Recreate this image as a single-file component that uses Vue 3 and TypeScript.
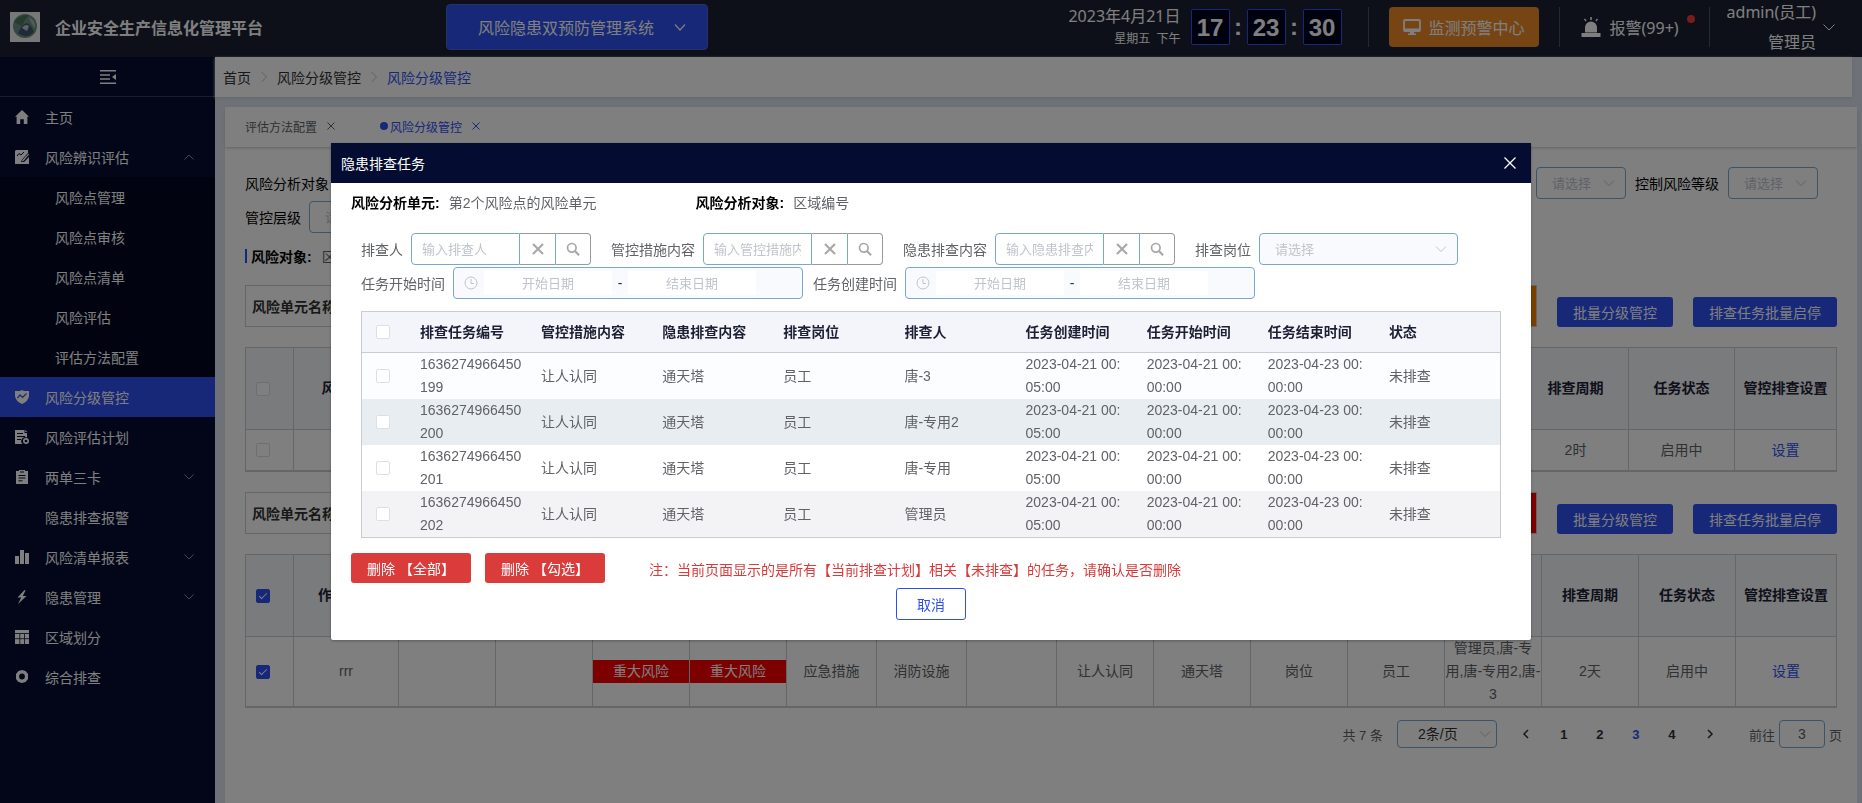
<script setup lang="ts">
import { ref } from 'vue'

interface MenuItem {
  label: string
  icon?: string
  arrow?: 'up' | 'down'
  active?: boolean
  children?: string[]
}

interface Column {
  width: string
  title: string
}

interface Cell {
  text: string
  kind?: 'tag' | 'link'
}

interface RiskUnit {
  id: string
  level: 'major' | 'larger'
  checked: boolean
  columns: Column[]
  cells: Cell[]
}

interface Task {
  id: string
  person: string
  checked: boolean
}

const menu: MenuItem[] = [
  { label: '主页', icon: 'home' },
  {
    label: '风险辨识评估',
    icon: 'edit',
    arrow: 'up',
    children: ['风险点管理', '风险点审核', '风险点清单', '风险评估', '评估方法配置'],
  },
  { label: '风险分级管控', icon: 'shield', active: true },
  { label: '风险评估计划', icon: 'plan' },
  { label: '两单三卡', icon: 'clipboard', arrow: 'down' },
  { label: '隐患排查报警' },
  { label: '风险清单报表', icon: 'bars', arrow: 'down' },
  { label: '隐患管理', icon: 'bolt', arrow: 'down' },
  { label: '区域划分', icon: 'grid' },
  { label: '综合排查', icon: 'hexagon' },
]

const blanks = (count: number, width: string): Column[] =>
  Array.from({ length: count }, () => ({ width, title: '' }))

const units = ref<RiskUnit[]>([
  {
    id: 'unit-1',
    level: 'larger',
    checked: false,
    columns: [
      { width: '112px', title: '风险名称' },
      ...blanks(10, 'auto'),
      { width: '106px', title: '排查周期' },
      { width: '106px', title: '任务状态' },
      { width: '101px', title: '管控排查设置' },
    ],
    cells: [
      ...Array.from({ length: 11 }, () => ({ text: '' })),
      { text: '2时' },
      { text: '启用中' },
      { text: '设置', kind: 'link' },
    ],
  },
  {
    id: 'unit-2',
    level: 'major',
    checked: true,
    columns: [
      { width: '105px', title: '作业活动' },
      ...blanks(4, '97px'),
      ...blanks(3, '90px'),
      ...blanks(5, 'auto'),
      { width: '97px', title: '排查周期' },
      { width: '97px', title: '任务状态' },
      { width: '100px', title: '管控排查设置' },
    ],
    cells: [
      { text: 'rrr' },
      { text: '' },
      { text: '' },
      { text: '重大风险', kind: 'tag' },
      { text: '重大风险', kind: 'tag' },
      { text: '应急措施' },
      { text: '消防设施' },
      { text: '' },
      { text: '让人认同' },
      { text: '通天塔' },
      { text: '岗位' },
      { text: '员工' },
      { text: '管理员,唐-专用,唐-专用2,唐-3' },
      { text: '2天' },
      { text: '启用中' },
      { text: '设置', kind: 'link' },
    ],
  },
])

const taskHeaders: string[] = [
  '排查任务编号', '管控措施内容', '隐患排查内容', '排查岗位', '排查人',
  '任务创建时间', '任务开始时间', '任务结束时间', '状态',
]

const tasks = ref<Task[]>([
  { id: '1636274966450199', person: '唐-3', checked: false },
  { id: '1636274966450200', person: '唐-专用2', checked: false },
  { id: '1636274966450201', person: '唐-专用', checked: false },
  { id: '1636274966450202', person: '管理员', checked: false },
])
const allTasks = ref(false)

const searches = [
  { id: 'q-person', label: '排查人', hint: '输入排查人' },
  { id: 'q-measure', label: '管控措施内容', hint: '输入管控措施内容' },
  { id: 'q-content', label: '隐患排查内容', hint: '输入隐患排查内容' },
]
const ranges = [
  { id: 'r-start', label: '任务开始时间' },
  { id: 'r-create', label: '任务创建时间' },
]

const pages: number[] = [1, 2, 3, 4]
const page = ref(3)
</script>

<template>
  <div class="app">
    <header class="topbar">
      <svg class="logo" viewBox="0 0 30 30" aria-hidden="true">
        <rect width="30" height="30" fill="#eef0ee" />
        <circle cx="15" cy="14" r="12" fill="#6f8f86" />
        <path d="M4 10 Q10 2 19 3 Q14 8 12 14 Q8 12 4 10Z" fill="#4b7a5c" />
        <path d="M8 21 Q12 12 17 11 Q22 14 24 20 Q16 28 8 21Z" fill="#3f5870" />
        <path d="M12 16 Q15 11 19 14 L17 19 Z" fill="#b8c8d4" />
        <path d="M19 5 Q26 9 25 16 Q21 12 19 5Z" fill="#a5bda2" />
      </svg>
      <h1>企业安全生产信息化管理平台</h1>
      <button type="button" class="system">
        风险隐患双预防管理系统
        <svg width="14" height="14" viewBox="0 0 14 14"><path d="M2 4.500l5 5.500 5-5.500" fill="none" stroke="currentColor" stroke-width="1.200" /></svg>
      </button>
      <div class="date"><span>2023年4月21日</span><small>星期五&nbsp; 下午</small></div>
      <div class="clock"><b>17</b><i>:</i><b>23</b><i>:</i><b>30</b></div>
      <span class="rule"></span>
      <button type="button" class="monitor">
        <svg width="18" height="18" viewBox="0 0 18 18"><rect x="1" y="2" width="16" height="11" rx="1" fill="none" stroke="currentColor" stroke-width="1.800" /><path d="M1 10.500h16v3H1zM7 13h4v2.500h2V17H5v-1.500h2z" fill="currentColor" /></svg>
        监测预警中心
      </button>
      <span class="rule"></span>
      <a class="alarm" href="#">
        <svg width="22" height="22" viewBox="0 0 22 22" fill="currentColor"><path d="M5 16.500v-5a6 6 0 0 1 12 0v5zM1.500 17H20.500V21H1.500zM10.200 1h1.600v3h-1.600zM4 3.500l1-.9 1.600 2-1 .9zM18 3.500l-1-.9-1.600 2 1 .9z" /></svg>
        <span>报警(99+)</span><em class="dot"></em>
      </a>
      <span class="rule"></span>
      <button type="button" class="user">
        <span>admin(员工)<br />管理员</span>
        <svg width="14" height="14" viewBox="0 0 14 14"><path d="M1.500 4.500L7 10l5.500-5.500" fill="none" stroke="currentColor" /></svg>
      </button>
    </header>

    <div class="body">
      <nav class="side">
        <button type="button" class="fold" aria-label="折叠菜单">
          <svg width="16" height="14" viewBox="0 0 16 14"><path d="M0 .8h16M0 5h10M0 9h10M0 13.200h16" stroke="currentColor" stroke-width="1.500" /><path d="M16 4v6l-4-3z" fill="currentColor" /></svg>
        </button>
        <ul>
          <li v-for="item in menu" :key="item.label">
            <a href="#" class="entry" :class="{ active: item.active }">
              <svg class="ico" viewBox="0 0 14 14" fill="currentColor" aria-hidden="true">
                <path v-if="item.icon === 'home'" d="M7 0l7 6.800h-1.600V14H8.800V9.200H5.200V14H1.600V6.800H0z" />
                <template v-if="item.icon === 'edit'">
                  <path d="M1 0h12v3L7 9.500 6 12h3l5-5v7H0V1z" />
                  <path d="M13.500 3.500l.5 1L8.500 11l-1.500.5.500-1.700z" />
                  <path d="M2 6l2-2.500 2 1.500 3-3" fill="none" stroke="#040c31" />
                </template>
                <template v-if="item.icon === 'shield'">
                  <path d="M7 0l2 1h5v5q-.5 5-7 8Q.500 11 0 6V1h5z" />
                  <path d="M2.500 8L5 5l2.500 2.500 4-4" fill="none" stroke="#2e50f0" stroke-width="1.200" />
                </template>
                <template v-if="item.icon === 'plan'">
                  <path d="M0 0h9.500v3H12v4.500a4 4 0 0 0-4.500 6.500H0z" />
                  <path d="M2 3.500h6M2 6.500h8M2 9.500h4" stroke="#040c31" />
                  <circle cx="11" cy="11" r="2.200" fill="none" stroke="currentColor" stroke-width="1.700" />
                  <path d="M10.300 0l2 2h-2z" />
                </template>
                <template v-if="item.icon === 'clipboard'">
                  <path d="M1 1h3V0h6v1h3v13H1z" />
                  <path d="M5 2h4M3.500 5.500h7M3.500 8h7M3.500 10.800h4" stroke="#040c31" />
                </template>
                <path v-if="item.icon === 'bars'" d="M0 6h4v8H0zM5 0h4v14H5zM10 3h4v11h-4z" />
                <path v-if="item.icon === 'bolt'" d="M9.500 0L2.500 7.500h3.700L3 14l8.500-8H7.800L10.500.5z" />
                <template v-if="item.icon === 'grid'">
                  <path d="M0 0h14v14H0z" />
                  <path d="M0 3.500h14M0 8.700h14M4.800 4v10M9.500 4v10" stroke="#040c31" stroke-width=".8" />
                </template>
                <path v-if="item.icon === 'hexagon'" fill-rule="evenodd" d="M7 0l3.500 1L13 4v5l-2.500 3L7 13l-3.500-1L1 9V4l2.500-3zM7 3.600a2.900 2.900 0 1 0 0 5.800 2.900 2.900 0 0 0 0-5.800z" />
              </svg>
              <span>{{ item.label }}</span>
              <svg v-if="item.arrow" class="arrow" :class="item.arrow" viewBox="0 0 10 10"><path d="M.5 2.500L5 7l4.500-4.500" fill="none" stroke="currentColor" /></svg>
            </a>
            <ul v-if="item.children" class="sub">
              <li v-for="child in item.children" :key="child"><a href="#" class="entry">{{ child }}</a></li>
            </ul>
          </li>
        </ul>
      </nav>

      <div class="content">
        <nav class="crumbs">
          <a href="#">首页</a>
          <svg width="8" height="12" viewBox="0 0 8 12"><path d="M1.500 1l5 5-5 5" fill="none" stroke="#c0c4cc" /></svg>
          <a href="#">风险分级管控</a>
          <svg width="8" height="12" viewBox="0 0 8 12"><path d="M1.500 1l5 5-5 5" fill="none" stroke="#c0c4cc" /></svg>
          <a href="#" class="here">风险分级管控</a>
        </nav>

        <main class="card">
          <div class="tabs">
            <a href="#" class="tab">评估方法配置<svg viewBox="0 0 8 8"><path d="M.5.5l7 7M7.500.5l-7 7" stroke="currentColor" /></svg></a>
            <a href="#" class="tab current">风险分级管控<svg viewBox="0 0 8 8"><path d="M.5.5l7 7M7.500.5l-7 7" stroke="currentColor" /></svg></a>
          </div>

          <div class="panel">
            <div class="filters">
              <span>风险分析对象</span>
              <div class="more">
                <span class="pick small">
                  <select aria-label="风险等级"><option>请选择</option></select>
                  <svg viewBox="0 0 12 12"><path d="M1 3.500l5 5 5-5" fill="none" stroke="currentColor" /></svg>
                </span>
                <label for="ctl-level">控制风险等级</label>
                <span class="pick small">
                  <select id="ctl-level"><option>请选择</option></select>
                  <svg viewBox="0 0 12 12"><path d="M1 3.500l5 5 5-5" fill="none" stroke="currentColor" /></svg>
                </span>
              </div>
            </div>
            <div class="filters">
              <label for="ctl-tier">管控层级</label>
              <span class="pick small">
                <select id="ctl-tier"><option>请选择</option></select>
                <svg viewBox="0 0 12 12"><path d="M1 3.500l5 5 5-5" fill="none" stroke="currentColor" /></svg>
              </span>
            </div>
            <p class="object"><strong>风险对象:</strong><span>区域</span></p>

            <section v-for="unit in units" :key="unit.id" class="unit">
              <div class="unit-bar">
                <div class="unit-name"><strong>风险单元名称</strong><i :class="unit.level"></i></div>
                <button type="button" class="primary">批量分级管控</button>
                <button type="button" class="primary">排查任务批量启停</button>
              </div>
              <table class="risk">
                <colgroup>
                  <col class="tick-col" />
                  <col v-for="(c, i) in unit.columns" :key="i" :style="{ width: c.width }" />
                </colgroup>
                <thead>
                  <tr>
                    <th class="tick"><input v-model="unit.checked" type="checkbox" aria-label="全选" /></th>
                    <th v-for="(c, i) in unit.columns" :key="i">{{ c.title }}</th>
                  </tr>
                </thead>
                <tbody>
                  <tr>
                    <td class="tick"><input v-model="unit.checked" type="checkbox" aria-label="选择" /></td>
                    <td v-for="(c, i) in unit.cells" :key="i">
                      <span v-if="c.kind === 'tag'" class="tag">{{ c.text }}</span>
                      <a v-else-if="c.kind === 'link'" href="#">{{ c.text }}</a>
                      <template v-else>{{ c.text }}</template>
                    </td>
                  </tr>
                </tbody>
              </table>
            </section>

            <div class="pager">
              <span class="total">共 7 条</span>
              <span class="pick size">
                <select aria-label="每页条数"><option>2条/页</option></select>
                <svg viewBox="0 0 12 12"><path d="M1 3.500l5 5 5-5" fill="none" stroke="currentColor" /></svg>
              </span>
              <button type="button" class="step" aria-label="上一页"><svg viewBox="0 0 8 10"><path d="M6 1L2 5l4 4" fill="none" stroke="currentColor" stroke-width="1.500" /></svg></button>
              <button v-for="n in pages" :key="n" type="button" :class="{ on: n === page }" @click="page = n">{{ n }}</button>
              <button type="button" class="step" aria-label="下一页"><svg viewBox="0 0 8 10"><path d="M2 1l4 4-4 4" fill="none" stroke="currentColor" stroke-width="1.500" /></svg></button>
              <label class="jump">前往<input v-model="page" type="text" />页</label>
            </div>
          </div>
        </main>
      </div>
    </div>

    <div class="mask">
      <div class="dialog" role="dialog" aria-labelledby="dialog-title">
        <div class="dialog-head">
          <h2 id="dialog-title">隐患排查任务</h2>
          <button type="button" aria-label="关闭"><svg width="12" height="12" viewBox="0 0 12 12"><path d="M.5.5l11 11M11.500.5l-11 11" stroke="currentColor" stroke-width="1.300" /></svg></button>
        </div>
        <div class="dialog-body">
          <div class="info">
            <p><strong>风险分析单元:</strong>第2个风险点的风险单元</p>
            <p><strong>风险分析对象:</strong>区域编号</p>
          </div>

          <form class="search" @submit.prevent>
            <div class="line wide">
              <div v-for="s in searches" :key="s.id" class="field">
                <label :for="s.id">{{ s.label }}</label>
                <div class="combo">
                  <input :id="s.id" type="text" :placeholder="s.hint" />
                  <button type="button" aria-label="清空"><svg viewBox="0 0 14 14"><path d="M2 2l10 10M12 2L2 12" stroke="currentColor" stroke-width="2" /></svg></button>
                  <button type="submit" aria-label="搜索"><svg viewBox="0 0 14 14"><circle cx="5.800" cy="5.800" r="4.300" fill="none" stroke="currentColor" stroke-width="1.700" /><path d="M9 9l4 4.300" stroke="currentColor" stroke-width="2" /></svg></button>
                </div>
              </div>
              <div class="field">
                <label for="q-post">排查岗位</label>
                <span class="pick post">
                  <select id="q-post"><option>请选择</option></select>
                  <svg viewBox="0 0 12 12"><path d="M1 3.500l5 5 5-5" fill="none" stroke="currentColor" /></svg>
                </span>
              </div>
            </div>
            <div class="line">
              <div v-for="r in ranges" :key="r.id" class="field">
                <label :for="r.id">{{ r.label }}</label>
                <div class="range">
                  <svg viewBox="0 0 14 14"><circle cx="7" cy="7" r="6" fill="none" stroke="currentColor" /><path d="M7 3v4.500h3" fill="none" stroke="currentColor" /></svg>
                  <input :id="r.id" type="text" placeholder="开始日期" />
                  <span>-</span>
                  <input type="text" placeholder="结束日期" aria-label="结束日期" />
                </div>
              </div>
            </div>
          </form>

          <table class="tasks">
            <colgroup>
              <col class="tick-col" />
              <col v-for="h in taskHeaders" :key="h" />
            </colgroup>
            <thead>
              <tr>
                <th class="tick"><input v-model="allTasks" type="checkbox" aria-label="全选" /></th>
                <th v-for="h in taskHeaders" :key="h">{{ h }}</th>
              </tr>
            </thead>
            <tbody>
              <tr v-for="t in tasks" :key="t.id">
                <td class="tick"><input v-model="t.checked" type="checkbox" aria-label="选择" /></td>
                <td>{{ t.id }}</td>
                <td>让人认同</td>
                <td>通天塔</td>
                <td>员工</td>
                <td>{{ t.person }}</td>
                <td>2023-04-21 00:05:00</td>
                <td>2023-04-21 00:00:00</td>
                <td>2023-04-23 00:00:00</td>
                <td>未排查</td>
              </tr>
            </tbody>
          </table>

          <div class="actions">
            <button type="button" class="danger">删除 【全部】</button>
            <button type="button" class="danger">删除 【勾选】</button>
            <p>注：当前页面显示的是所有【当前排查计划】相关【未排查】的任务，请确认是否删除</p>
          </div>
          <div class="foot"><button type="button" class="cancel">取消</button></div>
        </div>
      </div>
    </div>
  </div>
</template>

<style>
body {
  margin: 0;
}
</style>

<style scoped>
.app,
.app button,
.app input,
.app select {
  font-family: 'Liberation Sans', 'Noto Sans CJK SC', sans-serif;
  font-size: 14px;
}
.app {
  display: flex;
  flex-direction: column;
  min-height: 100vh;
  background: #dde4f0;
  color: #606266;
}
.app *,
.app *::before,
.app *::after {
  box-sizing: border-box;
}
a {
  color: inherit;
  text-decoration: none;
}
ul {
  list-style: none;
  margin: 0;
  padding: 0;
}
p,
h1,
h2 {
  margin: 0;
}
button {
  margin: 0;
  padding: 0;
  border: 0;
  background: none;
  color: inherit;
  white-space: nowrap;
}

/* top bar */
.topbar {
  display: flex;
  align-items: center;
  height: 57px;
  padding: 0 26px 3px 10px;
  background: #1a2032;
  color: #fff;
}
.topbar,
.app .system,
.app .monitor,
.app .user {
  font-family: 'Noto Sans', 'Noto Sans CJK SC', sans-serif;
  font-size: 16px;
}
.logo {
  width: 30px;
  height: 30px;
}
h1 {
  margin-left: 15px;
  font-size: 16px;
  font-weight: 700;
  white-space: nowrap;
}
.system {
  display: flex;
  align-items: center;
  justify-content: space-between;
  width: 262px;
  height: 46px;
  margin-left: 183px;
  padding: 0 20px 0 31px;
  border: 1px solid #4c68c8;
  border-radius: 4px;
  background: #2e50f0;
}
.date {
  display: flex;
  flex-direction: column;
  align-items: flex-end;
  margin-left: auto;
  line-height: 24px;
}
.date small {
  font-size: 12px;
  line-height: 22px;
}
.clock {
  display: flex;
  align-items: center;
  margin: 0 26px 0 10px;
  font: 700 24px/36px 'Liberation Sans', sans-serif;
}
.clock b {
  width: 39px;
  height: 36px;
  border: 1px solid #2e50f0;
  border-radius: 2px;
  background: #00021c;
  text-align: center;
}
.clock i {
  width: 17px;
  font-style: normal;
  text-align: center;
}
.rule {
  width: 1px;
  height: 40px;
  background: #4a5068;
}
.monitor {
  display: flex;
  align-items: center;
  justify-content: center;
  gap: 8px;
  width: 150px;
  height: 40px;
  margin: 0 20px;
  border-radius: 4px;
  background: #ee8a28;
}
.alarm {
  display: flex;
  align-items: center;
  gap: 8px;
  margin: 0 14px 0 20px;
}
.dot {
  align-self: flex-start;
  width: 8px;
  height: 8px;
  border-radius: 50%;
  background: #f03838;
}
.user {
  display: flex;
  align-items: center;
  gap: 6px;
  margin-left: 17px;
  line-height: 30px;
  text-align: right;
}

/* sidebar */
.body {
  display: flex;
  flex: 1;
}
.side {
  flex: none;
  width: 215px;
  background: #040c31;
  color: #fff;
}
.fold {
  display: flex;
  align-items: center;
  justify-content: center;
  width: 100%;
  height: 40px;
  border-bottom: 1px solid #343a56;
}
.entry {
  display: flex;
  align-items: center;
  height: 40px;
  padding: 0 21px 0 15px;
}
.entry.active {
  background: #2e50f0;
}
.ico {
  flex: none;
  width: 14px;
  height: 14px;
  margin-right: 16px;
}
.arrow {
  width: 10px;
  height: 10px;
  margin-left: auto;
  color: #8b8f9e;
}
.arrow.up {
  transform: rotate(180deg);
}
.sub {
  background: #020620;
}
.sub .entry {
  padding-left: 55px;
}

/* page content */
.content {
  display: flex;
  flex: 1;
  flex-direction: column;
  min-width: 0;
}
.crumbs {
  display: flex;
  align-items: center;
  gap: 9px;
  height: 40px;
  margin-right: 10px;
  padding-left: 8px;
  background: #fff;
  color: #303133;
  box-shadow: 0 1px 3px #c8d2da;
}
.crumbs .here {
  color: #2e50f0;
}
.card {
  flex: 1;
  margin: 10px 5px 0 10px;
  background: #fff;
}
.tabs {
  display: flex;
  gap: 45px;
  height: 40px;
  padding: 0 0 2px 20px;
  box-shadow: 0 1px 3px #c4c6ca;
}
.tab {
  display: flex;
  align-items: center;
  font-size: 12px;
}
.tab svg {
  width: 8px;
  height: 8px;
  margin-left: 10px;
}
.tab.current {
  color: #2e50f0;
}
.tab.current::before {
  content: '';
  width: 8px;
  height: 8px;
  margin-right: 2px;
  border-radius: 50%;
  background: #2e50f0;
}
.panel {
  padding: 20px 20px 0;
}
.filters {
  display: flex;
  align-items: center;
  gap: 8px;
  height: 32px;
  margin-bottom: 2px;
  color: #000;
}
.more {
  display: flex;
  align-items: center;
  gap: 9px;
  margin: 0 19px 0 auto;
}
.pick {
  display: inline-flex;
  position: relative;
  color: #c0c4cc;
}
.pick select {
  width: 100%;
  height: 32px;
  padding: 0 15px;
  border: 1px solid #7aa7cf;
  border-radius: 4px;
  background: #f8fafd;
  color: #c0c4cc;
  font-size: 13px;
  appearance: none;
}
.pick svg {
  position: absolute;
  top: 50%;
  right: 11px;
  width: 12px;
  height: 12px;
  margin-top: -6px;
  pointer-events: none;
}
.pick.small {
  width: 90px;
}
.pick.small select {
  background: #fff;
}
.object {
  display: flex;
  align-items: center;
  height: 42px;
  margin-bottom: 8px;
}
.object::before {
  content: '';
  width: 2px;
  height: 14px;
  margin-right: 4px;
  background: #2e50f0;
}
.object strong {
  margin-right: 10px;
  color: #000;
}
.unit-bar {
  display: flex;
  align-items: flex-end;
  gap: 20px;
}
.unit-name {
  display: flex;
  flex: 1;
  align-items: center;
  height: 42px;
  padding-left: 6px;
  border: 1px solid #cacccf;
  color: #303133;
}
.unit-name i {
  width: 120px;
  height: 40px;
  margin-left: auto;
}
.larger {
  background: #f87c00;
}
.major {
  background: #fa0000;
}
.primary {
  height: 30px;
  padding: 0 16px;
  border-radius: 3px;
  background: #2e50f0;
  color: #fff;
}

/* tables */
table {
  width: 100%;
  border: 1px solid #cacccf;
  border-collapse: separate;
  border-spacing: 0;
  table-layout: fixed;
}
.tick-col {
  width: 48px;
}
th,
td {
  padding: 0;
  line-height: 23px;
}
.risk {
  margin: 20px 0;
  text-align: center;
}
.risk th,
.risk td {
  border-right: 1px solid #cacccf;
  border-bottom: 1px solid #cacccf;
}
.risk th:last-child,
.risk td:last-child {
  border-right: 0;
}
.risk th {
  height: 82px;
  background: #f4f6fa;
  color: #1d2035;
}
.risk td {
  height: 41px;
  word-break: break-all;
}
.risk a {
  color: #2e50f0;
}
.risk .tick {
  padding-left: 10px;
  text-align: left;
}
.tag {
  display: block;
  background: #fa0000;
  color: #fff;
}
input[type='checkbox'] {
  display: block;
  position: relative;
  width: 14px;
  height: 14px;
  margin: 0;
  border: 1px solid #dcdfe6;
  border-radius: 2px;
  background: #fff;
  appearance: none;
}
input[type='checkbox']:checked {
  border-color: #2e50f0;
  background: #2e50f0;
}
input[type='checkbox']:checked::after {
  content: '';
  position: absolute;
  top: 1px;
  left: 4px;
  width: 4px;
  height: 8px;
  border: solid #fff;
  border-width: 0 1px 1px 0;
  transform: rotate(45deg);
}

/* pagination */
.pager {
  display: flex;
  align-items: center;
  justify-content: flex-end;
  margin: -8px -5px 0 0;
  font-size: 13px;
}
.pager .total {
  margin-right: 14px;
}
.pick.size {
  width: 100px;
  margin-right: 9px;
}
.pick.size select {
  height: 28px;
  padding: 0 20px;
  background: #fff;
  color: #303133;
  font-size: 14px;
}
.pick.size svg {
  right: 6px;
}
.pager button {
  width: 36px;
  height: 28px;
  color: #303133;
  font-size: 13px;
  font-weight: 700;
}
.pager .step {
  width: 40px;
}
.pager button svg {
  width: 8px;
  height: 10px;
}
.pager .on {
  color: #2e50f0;
}
.jump {
  display: flex;
  align-items: center;
  gap: 4px;
  margin-left: 19px;
}
.jump input {
  width: 46px;
  height: 28px;
  border: 1px solid #7aa7cf;
  border-radius: 4px;
  background: #fff;
  color: #606266;
  text-align: center;
}

/* dialog */
.mask {
  display: flex;
  position: fixed;
  inset: 0;
  align-items: flex-start;
  justify-content: center;
  padding-top: 143px;
  background: rgba(0, 0, 0, 0.5);
}
.dialog {
  width: 1200px;
  border-radius: 2px;
  background: #fff;
  box-shadow: 0 1px 3px rgba(0, 0, 0, 0.3);
}
.dialog-head {
  display: flex;
  align-items: center;
  justify-content: space-between;
  height: 40px;
  padding: 0 15px 0 10px;
  background: #040c31;
  color: #fff;
}
.dialog-head h2 {
  font-size: 14px;
  font-weight: 400;
}
.dialog-head svg {
  display: block;
}
.dialog-body {
  padding: 0 20px 20px;
}
.info {
  display: flex;
  gap: 99px;
  line-height: 40px;
}
.info strong {
  margin-right: 9px;
  color: #000;
}
.search {
  padding: 10px 10px 12px;
}
.line {
  display: flex;
  gap: 10px;
}
.line.wide {
  gap: 20px;
  margin-bottom: 2px;
}
.field {
  display: flex;
  align-items: center;
  gap: 8px;
}
.combo {
  display: flex;
  width: 180px;
  height: 32px;
}
.combo input {
  flex: 1;
  min-width: 0;
  padding: 0 10px;
  border: 1px solid #7aa7cf;
  border-radius: 4px 0 0 4px;
  background: #fff;
  font-size: 13px;
}
.combo button {
  display: flex;
  align-items: center;
  justify-content: center;
  width: 36px;
  border: 1px solid #97999e;
  border-left: 0;
  color: #a6a6a6;
}
.combo button + button {
  border-left: 1px solid #7aa7cf;
  border-radius: 0 4px 4px 0;
}
.combo button:nth-child(2) {
  width: 35px;
  border-right: 0;
}
.combo svg {
  width: 14px;
  height: 14px;
}
input::placeholder {
  color: #c0c4cc;
  opacity: 1;
}
.pick.post {
  width: 199px;
}
.range {
  display: flex;
  align-items: center;
  width: 350px;
  height: 32px;
  padding-left: 10px;
  border: 1px solid #7aa7cf;
  border-radius: 4px;
  background: #f8fafd;
  color: #c0c4cc;
}
.range svg {
  width: 14px;
  height: 14px;
  margin-right: 6px;
}
.range input {
  width: 128px;
  height: 24px;
  padding: 0;
  border: 0;
  background: #fff;
  font-size: 13px;
  text-align: center;
}
.range span {
  width: 16px;
  color: #303133;
  text-align: center;
}
.tasks {
  width: calc(100% - 20px);
  margin: 0 10px;
  text-align: left;
}
.tasks th {
  height: 41px;
  padding-left: 10px;
  border-bottom: 1px solid #cacccf;
  background: #f4f5fa;
  color: #1d2035;
}
.tasks td {
  height: 46px;
  padding: 0 9px 0 10px;
  background: #fcfdfe;
  word-break: break-all;
}
.tasks .tick {
  padding-left: 14px;
}
.tasks tr:nth-child(2) td {
  background: #e8edf2;
}
.tasks tr:nth-child(3) td {
  background: #fff;
}
.tasks tr:nth-child(4) td {
  background: #f3f3f6;
}
.actions {
  display: flex;
  align-items: center;
  gap: 14px;
  height: 30px;
  margin-top: 15px;
}
.actions p {
  margin: 2px 0 0 30px;
  color: #dc3a3a;
}
.danger {
  width: 120px;
  height: 30px;
  border-radius: 3px;
  background: #da3b3b;
  color: #fff;
}
.foot {
  display: flex;
  justify-content: center;
  margin-top: 5px;
}
.cancel {
  width: 70px;
  height: 32px;
  border: 1px solid #2e50f0;
  border-radius: 3px;
  color: #2e50f0;
}
</style>
